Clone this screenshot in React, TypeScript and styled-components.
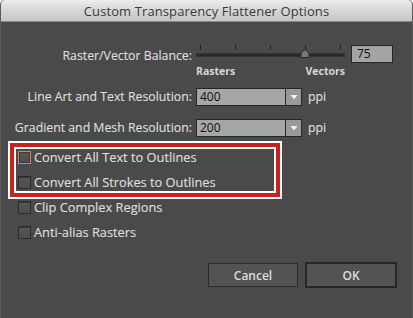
import React from 'react';
import styled, { createGlobalStyle } from 'styled-components';

const GlobalStyle = createGlobalStyle`
  html, body {
    margin: 0;
    padding: 0;
    background: #ffffff;
  }
  * {
    box-sizing: border-box;
  }
`;

const Window = styled.div`
  width: 413px;
  height: 318px;
  display: flex;
  flex-direction: column;
  background: #4a4a4a;
  border-radius: 5px 5px 0 0;
  overflow: hidden;
  border-left: 1px solid #5a5a5a;
  border-right: 1px solid #5a5a5a;
  font-family: 'Open Sans', 'DejaVu Sans', sans-serif;
  color: #dedede;
`;

const TitleBar = styled.div`
  height: 22px;
  flex-shrink: 0;
  display: flex;
  align-items: center;
  justify-content: center;
  background: linear-gradient(180deg, #ededed 0%, #d6d6d6 50%, #c6c6c6 100%);
  border-bottom: 1px solid #8a8a8a;
  color: #3a3a3a;
  font-size: 13px;
  letter-spacing: 0.1px;
`;

const Body = styled.div`
  display: flex;
  flex-direction: column;
  flex: 1;
`;

const Row = styled.div<{ top: number }>`
  display: flex;
  align-items: flex-start;
  margin-top: ${p => p.top}px;
`;

const Label = styled.div`
  width: 195px;
  flex-shrink: 0;
  padding-right: 4px;
  text-align: right;
  font-size: 12.3px;
  line-height: 17px;
  white-space: nowrap;
  -webkit-text-stroke: 0.15px #dedede;
`;

const SliderBlock = styled.div`
  display: flex;
  flex-direction: column;
  width: 150px;
`;

const Scale = styled.div`
  display: flex;
  justify-content: space-between;
  width: 149px;
  margin-top: 2px;
  font-size: 10.5px;
  font-weight: 700;
  line-height: 12px;
  color: #d6d6d6;
`;

const NumberBox = styled.div`
  width: 42px;
  height: 18px;
  margin-left: 5px;
  padding-left: 5px;
  background: #a4a4a4;
  border: 1px solid #262626;
  color: #111;
  font-size: 12px;
  line-height: 16px;
`;

const Select = styled.div`
  display: flex;
  width: 106px;
  height: 18px;
  background: #a6a6a6;
  border: 1px solid #262626;
`;

const SelectValue = styled.div`
  flex: 1;
  padding-left: 3px;
  color: #111;
  font-size: 12px;
  line-height: 16px;
`;

const SelectButton = styled.div`
  width: 16px;
  display: flex;
  align-items: center;
  justify-content: center;
  background: #999999;
  border-left: 1px solid #2a2a2a;
`;

const Unit = styled.div`
  margin-left: 6px;
  font-size: 12.3px;
  line-height: 17px;
  -webkit-text-stroke: 0.15px #dedede;
`;

const HighlightBox = styled.div`
  margin: 4px 0 0 7px;
  width: 274px;
  border: 2px solid #ffffff;
`;

const RedFrame = styled.div`
  border: 4px solid #c9221d;
`;

const InnerFrame = styled.div`
  display: flex;
  flex-direction: column;
  padding: 0 0 1px 0;
  border: 2px solid #ffffff;
`;

const CheckList = styled.div<{ left: number }>`
  display: flex;
  flex-direction: column;
  gap: 9px;
  padding-left: ${p => p.left}px;
`;

const CheckRow = styled.div`
  display: flex;
  align-items: center;
  height: 16px;
  gap: 3px;
  font-size: 12.8px;
  white-space: nowrap;
  -webkit-text-stroke: 0.15px #dedede;
`;

const Box = styled.span<{ focused?: boolean }>`
  width: 13px;
  height: 13px;
  flex-shrink: 0;
  background: linear-gradient(180deg, #575757 0%, #4d4d4d 100%);
  border: 1px solid ${p => (p.focused ? '#e08a2c' : '#2c2c2c')};
  box-shadow: ${p => (p.focused ? 'inset 0 0 0 1px #3a3a3a' : 'inset 0 1px 0 #3a3a3a')};
`;

const ButtonRow = styled.div`
  display: flex;
  justify-content: flex-end;
  align-items: center;
  gap: 7px;
  margin-top: 22px;
  padding-right: 15px;
`;

const Button = styled.div<{ primary?: boolean }>`
  width: ${p => (p.primary ? 92 : 90)}px;
  height: ${p => (p.primary ? 26 : 24)}px;
  display: flex;
  align-items: center;
  justify-content: center;
  background: #535353;
  border: ${p => (p.primary ? '2px solid #262626' : '1px solid #2c2c2c')};
  font-size: 12px;
  font-weight: 600;
  color: #dcdcdc;
`;

const Slider: React.FC<{ value: number }> = ({ value }) => {
  const ticks = [4, 39, 74, 109, 144];
  const x = 4 + (140 * value) / 100;
  return (
    <svg width="150" height="18" viewBox="0 0 150 18">
      {ticks.map(t => (
        <rect key={t} x={t} y={0} width={1} height={5} fill="#222" />
      ))}
      <rect x={0.5} y={8.5} width={148} height={3} fill="#2a2a2a" stroke="#333" />
      <path
        d={`M${x - 4} 12.5 L${x - 4} 8 L${x} 4.5 L${x + 4} 8 L${x + 4} 12.5 Z`}
        fill="#787878"
        stroke="#2a2a2a"
      />
    </svg>
  );
};

const Arrow = () => (
  <svg width="8" height="6" viewBox="0 0 8 6">
    <path d="M0.5 1 L7.5 1 L4 5.5 Z" fill="#f2f2f2" />
  </svg>
);

const App: React.FC = () => {
  const checks = [
    { label: 'Convert All Text to Outlines', focused: true },
    { label: 'Convert All Strokes to Outlines' },
  ];
  const plain = ['Clip Complex Regions', 'Anti-alias Rasters'];

  return (
    <>
      <GlobalStyle />
      <Window>
        <TitleBar>Custom Transparency Flattener Options</TitleBar>
        <Body>
          <Row top={23}>
            <Label style={{ marginTop: 2 }}>Raster/Vector Balance:</Label>
            <SliderBlock>
              <Slider value={75} />
              <Scale>
                <span>Rasters</span>
                <span>Vectors</span>
              </Scale>
            </SliderBlock>
            <NumberBox>75</NumberBox>
          </Row>

          <Row top={11}>
            <Label>Line Art and Text Resolution:</Label>
            <Select>
              <SelectValue>400</SelectValue>
              <SelectButton>
                <Arrow />
              </SelectButton>
            </Select>
            <Unit>ppi</Unit>
          </Row>

          <Row top={13}>
            <Label>Gradient and Mesh Resolution:</Label>
            <Select>
              <SelectValue>200</SelectValue>
              <SelectButton>
                <Arrow />
              </SelectButton>
            </Select>
            <Unit>ppi</Unit>
          </Row>

          <HighlightBox>
            <RedFrame>
              <InnerFrame>
                <CheckList left={2}>
                  {checks.map(c => (
                    <CheckRow key={c.label}>
                      <Box focused={c.focused} />
                      {c.label}
                    </CheckRow>
                  ))}
                </CheckList>
              </InnerFrame>
            </RedFrame>
          </HighlightBox>

          <CheckList left={17}>
            {plain.map(label => (
              <CheckRow key={label}>
                <Box />
                {label}
              </CheckRow>
            ))}
          </CheckList>

          <ButtonRow>
            <Button>Cancel</Button>
            <Button primary>OK</Button>
          </ButtonRow>
        </Body>
      </Window>
    </>
  );
};

export default App;
